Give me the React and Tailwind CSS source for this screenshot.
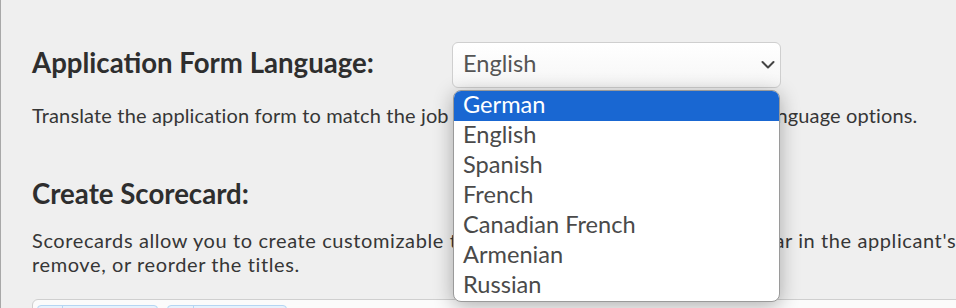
export default function App() {
  const options = ["German", "English", "Spanish", "French", "Canadian French", "Armenian", "Russian"];
  return (
    <div className="w-[956px] h-[308px] overflow-hidden bg-[#efefef] border-l border-[#a8a8a8] font-['Lato',sans-serif] text-[#363636]">
      <div className="w-[1300px] pl-[31px] pt-[42px]">
        <div className="flex items-start h-[46px]">
          <h2 className="w-[420px] mt-[4px] text-[27.6px] leading-[34px] font-bold text-[#2e2e2e]">Application Form Language:</h2>
          <div className="relative w-[329px] h-[46px]">
            <div className="w-full h-full rounded-md border border-[#cfcfcf] bg-gradient-to-b from-white to-[#f6f6f6] flex items-center justify-between pl-[10px] pr-[5px]">
              <span className="mb-[3px] text-[23.6px] text-[#555]">English</span>
              <svg width="14" height="14" viewBox="0 0 14 14" fill="none">
                <path d="M1.5 4L7 9.5L12.5 4" stroke="#444" strokeWidth="2" strokeLinecap="round" strokeLinejoin="round" />
              </svg>
            </div>
            <div className="absolute left-[1px] top-[48px] w-[327px] rounded-lg border border-[#9a9a9a] bg-white overflow-hidden shadow-[0_4px_20px_rgba(0,0,0,0.3)] z-10">
              {options.map((o, i) => (
                <div
                  key={o}
                  className={
                    i === 0
                      ? "h-[30px] flex items-center pl-[9px] text-[23.6px] bg-[#1967d2] text-white"
                      : "h-[30px] flex items-center pl-[9px] text-[23.6px] text-[#4a4a4a]"
                  }
                >
                  <span className="mb-[3px]">{o}</span>
                </div>
              ))}
            </div>
          </div>
        </div>
        <p className="mt-[15px] text-[20px] leading-[24px] tracking-[0.15px]">
          Translate the application form to match the job posting's language. See the list for language options.
        </p>
        <h2 className="mt-[50px] text-[27.6px] leading-[34px] font-bold text-[#2e2e2e]">Create Scorecard:</h2>
        <p className="mt-[17px] text-[20px] leading-[24px] tracking-[0.6px]">
          Scorecards allow you to create customizable titles and form fields that will appear in the applicant's profile. Add,
          <br />
          remove, or reorder the titles.
        </p>
        <div className="mt-[23px] rounded-tl-md border border-[#cfcfcf] bg-[#fbfbfb] h-[40px] flex gap-[9px] pl-[4px] pt-[5px]">
          <div className="w-[121px] h-[30px] rounded-sm border border-[#b5d6f3] bg-[#e8f2fc] flex">
            <div className="w-[25px] border-r border-[#b5d6f3]" />
          </div>
          <div className="w-[120px] h-[30px] rounded-sm border border-[#b5d6f3] bg-[#e8f2fc] flex">
            <div className="w-[26px] border-r border-[#b5d6f3]" />
          </div>
        </div>
      </div>
    </div>
  );
}
